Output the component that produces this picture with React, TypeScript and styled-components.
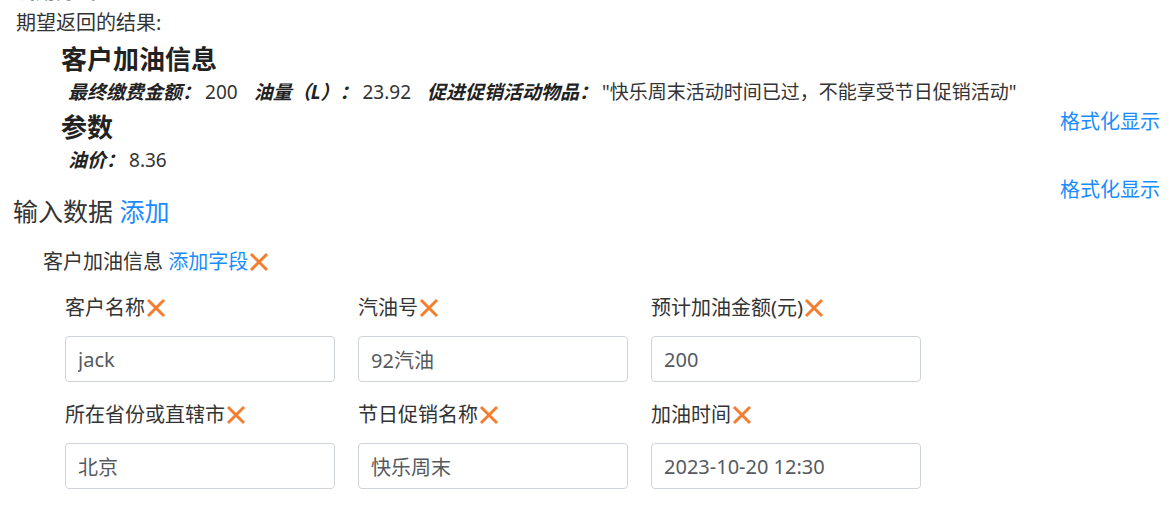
import React from 'react';
import styled, { createGlobalStyle } from 'styled-components';

const GlobalStyle = createGlobalStyle`
  body {
    margin: 0;
    background: #ffffff;
    font-family: 'Noto Sans', 'Noto Sans CJK SC', sans-serif;
    color: #333333;
  }
`;

const Page = styled.div`
  width: 1175px;
  height: 522px;
  box-sizing: border-box;
  padding: 0 15px 0 13px;
  overflow: hidden;
`;

const CutLine = styled.div`
  font-size: 20px;
  line-height: 20px;
  margin-top: -18px;
  padding-left: 3px;
`;

const ResultTitle = styled.div`
  font-size: 20px;
  line-height: 30px;
  margin-top: 6px;
  padding-left: 3px;
`;

const Block = styled.div`
  padding-left: 48px;
`;

const BlockHeading = styled.div<{ $top: number }>`
  font-size: 26px;
  font-weight: 700;
  line-height: 36px;
  margin-top: ${(p) => p.$top}px;
  color: #222222;
`;

const DetailRow = styled.div`
  font-size: 19px;
  line-height: 30px;
  padding-left: 7px;
  white-space: nowrap;
`;

const DetailItem = styled.span`
  margin-right: 16px;
`;

const DetailKey = styled.b`
  font-style: italic;
  font-weight: 700;
  color: #222222;
`;

const DetailValue = styled.span`
  margin-left: 4px;
`;

const FormatLink = styled.a`
  float: right;
  font-size: 20px;
  line-height: 30px;
  color: #1a8cff;
  text-decoration: none;
  cursor: pointer;
`;

const SectionTitle = styled.div`
  font-size: 25px;
  line-height: 36px;
  margin-top: 18px;
`;

const LinkText = styled.a`
  color: #1a8cff;
  text-decoration: none;
  cursor: pointer;
`;

const GroupRow = styled.div`
  display: flex;
  align-items: center;
  font-size: 20px;
  line-height: 30px;
  margin-top: 18px;
  padding-left: 30px;
`;

const FieldGrid = styled.div`
  display: grid;
  grid-template-columns: repeat(3, 270px);
  column-gap: 23px;
  row-gap: 18px;
  margin-top: 16px;
  padding-left: 52px;
`;

const Field = styled.div`
  display: flex;
  flex-direction: column;
  gap: 13px;
`;

const FieldLabel = styled.div`
  display: flex;
  align-items: center;
  font-size: 20px;
  line-height: 30px;
`;

const FieldInput = styled.input`
  box-sizing: border-box;
  width: 270px;
  height: 46px;
  padding: 0 12px;
  border: 1px solid #cfd4da;
  border-radius: 4px;
  font-family: 'Noto Sans', 'Noto Sans CJK SC', sans-serif;
  font-size: 20px;
  color: #555a60;
  background: #ffffff;
  outline: none;
`;

const RemoveIcon = styled.svg`
  width: 20px;
  height: 20px;
  flex: none;
  margin-left: 1px;
  cursor: pointer;
`;

const Remove = () => (
  <RemoveIcon viewBox="0 0 20 20">
    <path d="M2 2 L18 18 M18 2 L2 18" stroke="#f47d30" strokeWidth="3" fill="none" />
  </RemoveIcon>
);

const fields = [
  { label: '客户名称', value: 'jack' },
  { label: '汽油号', value: '92汽油' },
  { label: '预计加油金额(元)', value: '200' },
  { label: '所在省份或直辖市', value: '北京' },
  { label: '节日促销名称', value: '快乐周末' },
  { label: '加油时间', value: '2023-10-20 12:30' },
];

const App = () => {
  return (
    <>
      <GlobalStyle />
      <Page>
        <CutLine>调用方式</CutLine>
        <ResultTitle>期望返回的结果:</ResultTitle>
        <Block>
          <BlockHeading $top={3}>客户加油信息</BlockHeading>
          <DetailRow>
            <DetailItem>
              <DetailKey>最终缴费金额：</DetailKey>
              <DetailValue>200</DetailValue>
            </DetailItem>
            <DetailItem>
              <DetailKey>油量（L）：</DetailKey>
              <DetailValue>23.92</DetailValue>
            </DetailItem>
            <DetailItem>
              <DetailKey>促进促销活动物品：</DetailKey>
              <DetailValue>"快乐周末活动时间已过，不能享受节日促销活动"</DetailValue>
            </DetailItem>
          </DetailRow>
        </Block>
        <FormatLink>格式化显示</FormatLink>
        <Block>
          <BlockHeading $top={2}>参数</BlockHeading>
          <DetailRow>
            <DetailItem>
              <DetailKey>油价：</DetailKey>
              <DetailValue>8.36</DetailValue>
            </DetailItem>
          </DetailRow>
        </Block>
        <FormatLink>格式化显示</FormatLink>
        <SectionTitle>
          输入数据 <LinkText>添加</LinkText>
        </SectionTitle>
        <GroupRow>
          客户加油信息&nbsp;<LinkText>添加字段</LinkText>
          <Remove />
        </GroupRow>
        <FieldGrid>
          {fields.map((f) => (
            <Field key={f.label}>
              <FieldLabel>
                {f.label}
                <Remove />
              </FieldLabel>
              <FieldInput defaultValue={f.value} />
            </Field>
          ))}
        </FieldGrid>
      </Page>
    </>
  );
};

export default App;
